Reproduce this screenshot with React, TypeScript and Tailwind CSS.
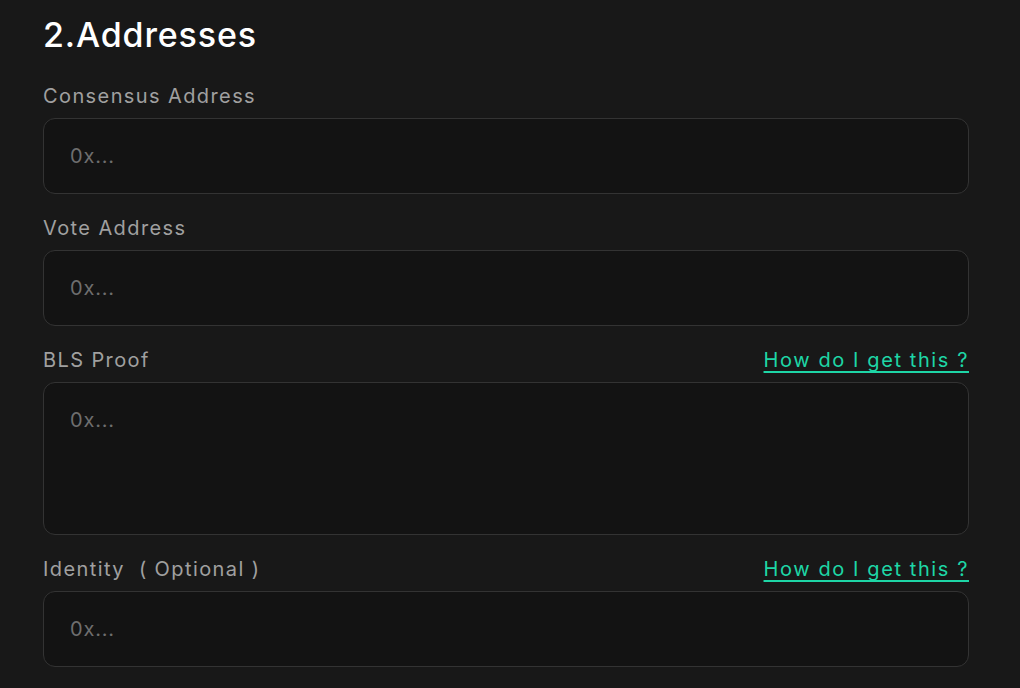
const Field = ({
  label,
  hint,
  tall,
}: {
  label: React.ReactNode;
  hint?: boolean;
  tall?: boolean;
}) => (
  <div className="flex flex-col">
    <div className="flex items-center justify-between h-6 mb-[10px]">
      <span className="text-[20px] text-[#a0a0a0] leading-6 tracking-[0.07em]">{label}</span>
      {hint && (
        <a
          href="#"
          className="text-[20px] leading-6 tracking-[0.08em] text-[#1ed6a6] underline underline-offset-[4px] decoration-[2px]"
        >
          How do I get this ?
        </a>
      )}
    </div>
    {tall ? (
      <textarea
        placeholder="0x..."
        className="h-[153px] w-full resize-none rounded-[12px] border border-[#333333] bg-[#131313] px-[26px] py-[25px] text-[20px] leading-6 tracking-[0.04em] text-white placeholder:text-[#6e6e6e] outline-none"
      />
    ) : (
      <input
        placeholder="0x..."
        className="h-[76px] w-full rounded-[12px] border border-[#333333] bg-[#131313] px-[26px] text-[20px] tracking-[0.04em] text-white placeholder:text-[#6e6e6e] outline-none"
      />
    )}
  </div>
);

export default function App() {
  return (
    <div className="min-h-[688px] w-full bg-[#181818] pl-[43px] pr-[51px] pt-[15px] font-['Inter',sans-serif]">
      <h1 className="text-[34px] leading-10 font-medium text-white tracking-[0.025em] mb-[29px]">2.Addresses</h1>
      <div className="flex flex-col gap-[22px]">
        <Field label="Consensus Address" />
        <Field label="Vote Address" />
        <Field label="BLS Proof" hint tall />
        <Field
          label={
            <>
              Identity&nbsp;&nbsp;(&nbsp;Optional&nbsp;)
            </>
          }
          hint
        />
      </div>
    </div>
  );
}
